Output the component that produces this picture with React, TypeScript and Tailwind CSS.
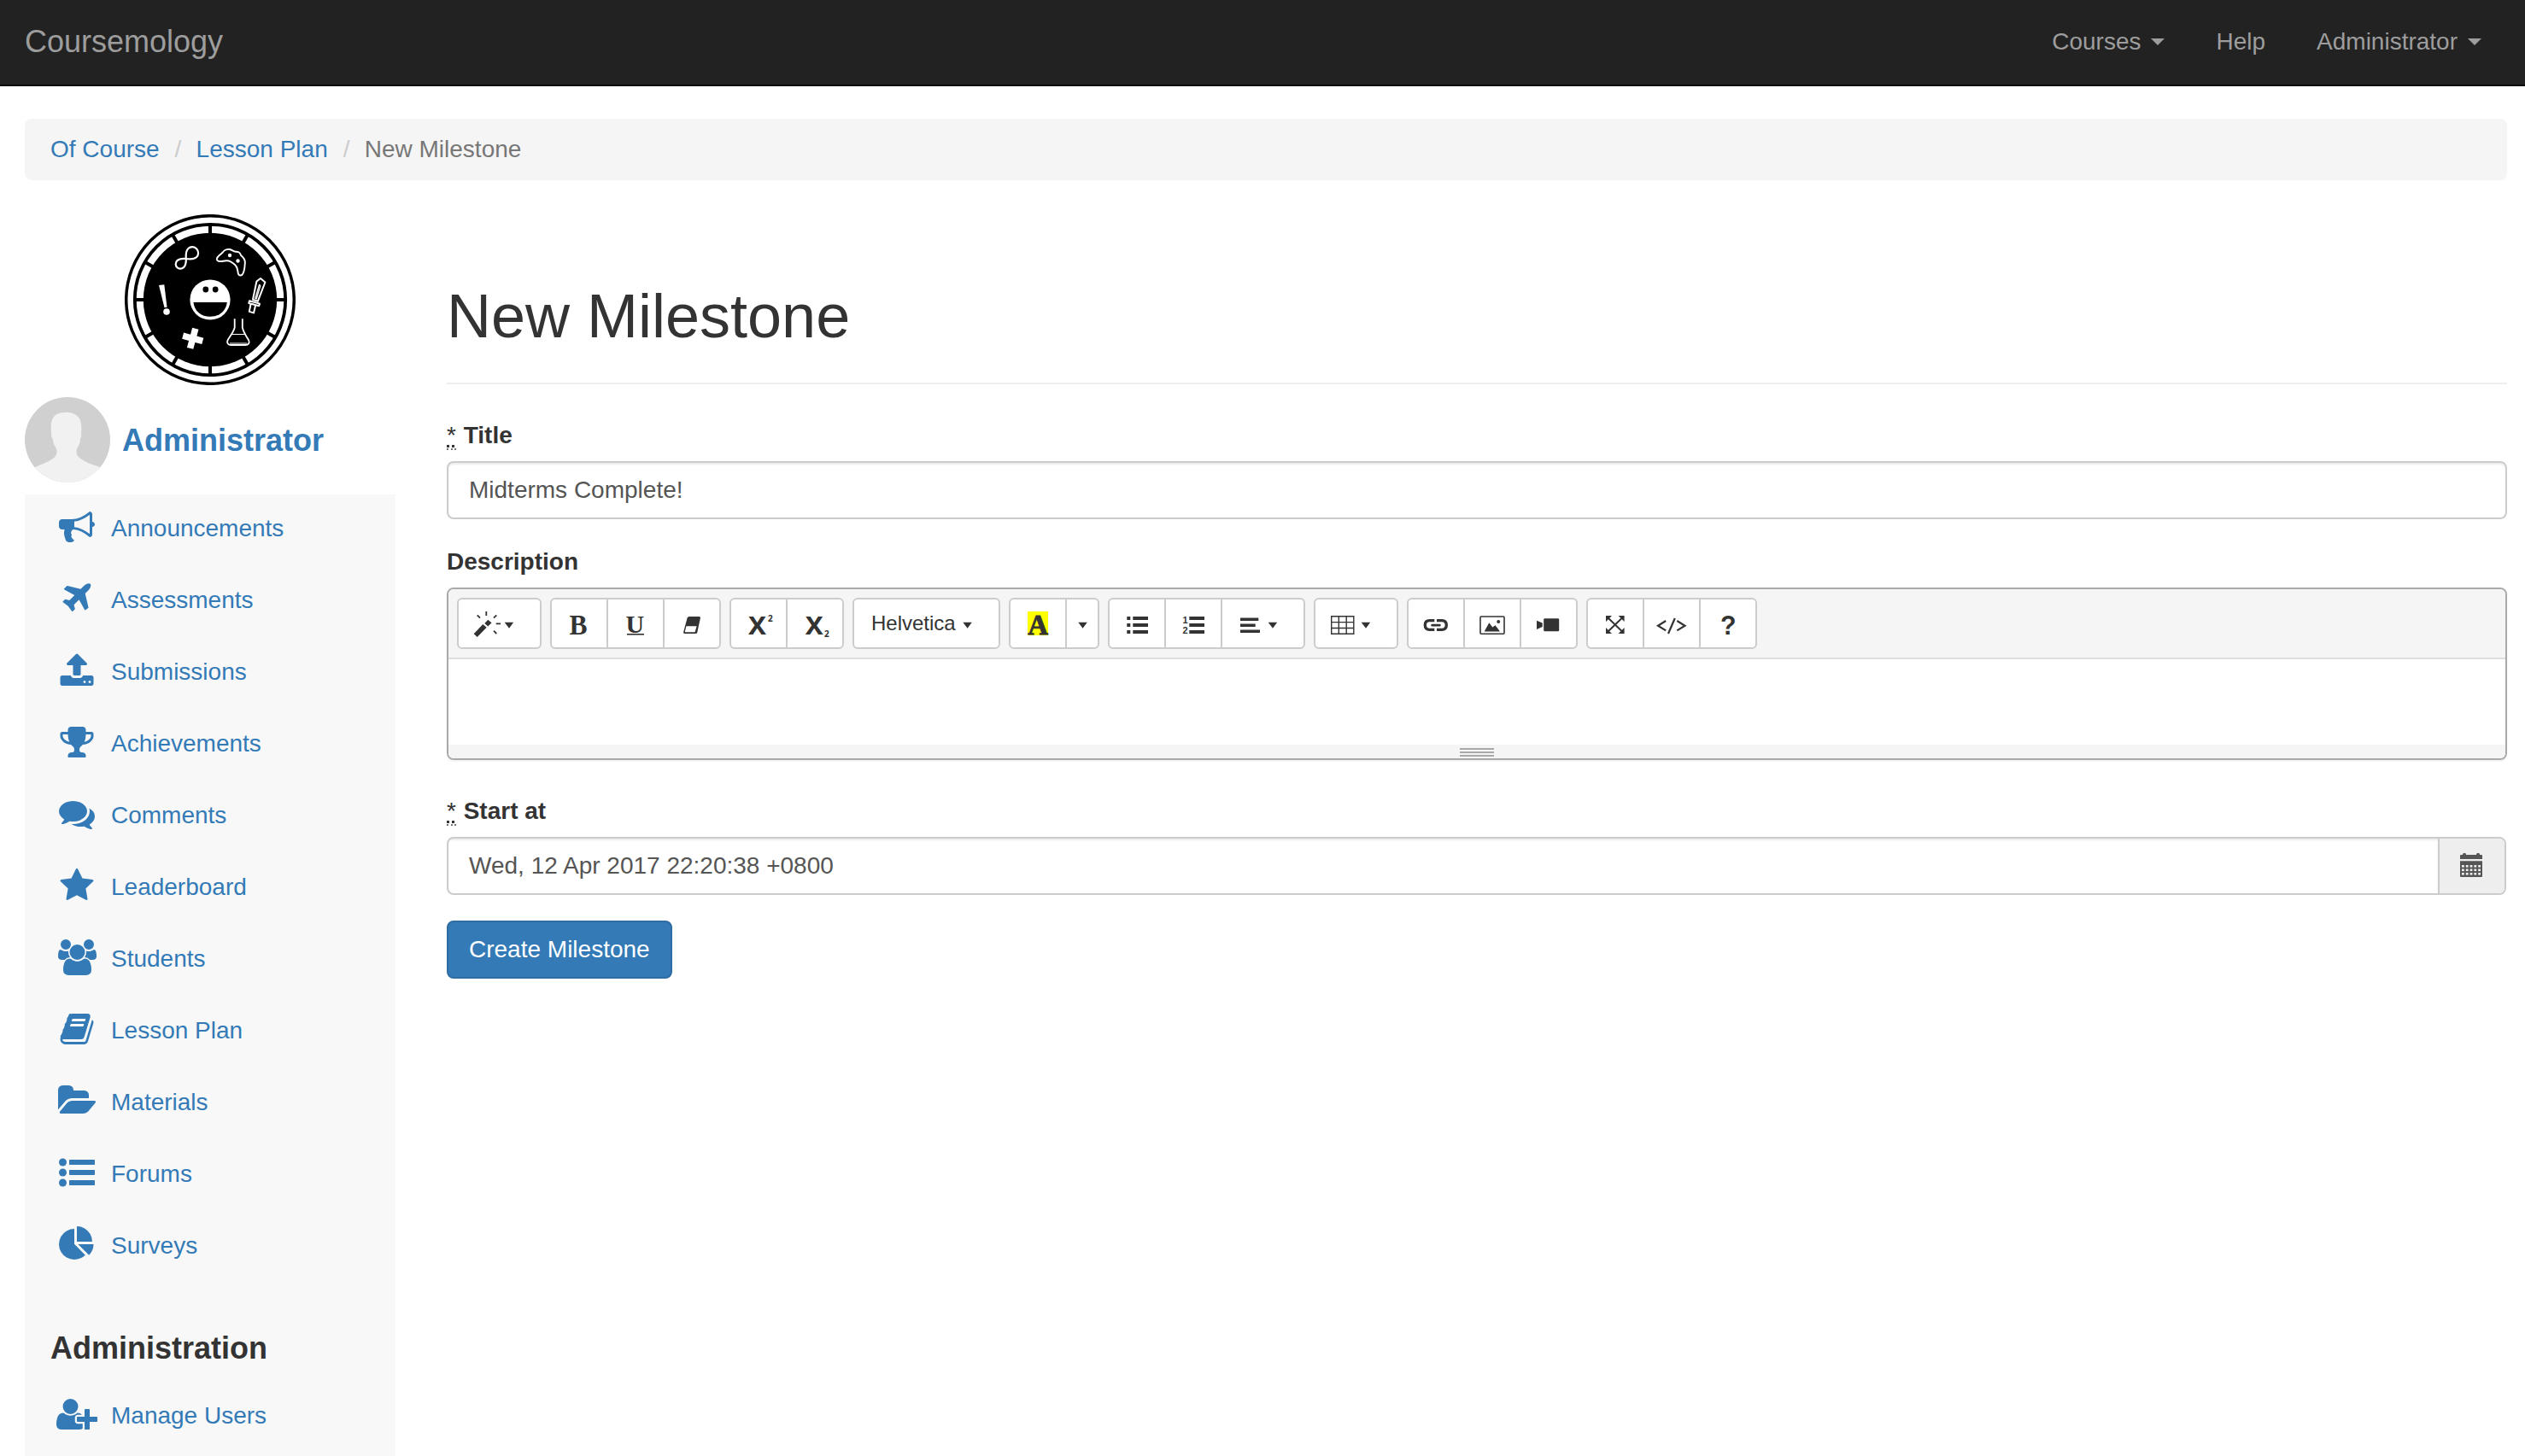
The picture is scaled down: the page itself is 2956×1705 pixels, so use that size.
import React from "react";

type IconDef = { w: number; body: React.ReactNode };

const icons: Record<string, IconDef> = {
  bullhorn: {
    w: 1792,
    body: (
      <path d="M1664 640q53 0 90.5 37.5t37.5 90.5-37.5 90.5-90.5 37.5v384q0 52-38 90t-90 38q-417-347-812-380-58 19-91 66t-31 100.5 40 92.5q-20 33-23 65.5t6 58 33.5 55 48 50 61.5 50.5q-29 58-111.5 83t-168.5 11.5-132-55.5q-7-23-29.5-87.5t-32-94.5-23-89-15-101 3.5-98.5 22-110.5h-122q-66 0-113-47t-47-113v-192q0-66 47-113t113-47h480q435 0 896-384 52 0 90 38t38 90v384zm-128 604v-954q-394 302-768 343v270q377 42 768 341z" />
    ),
  },
  plane: {
    w: 1792,
    body: (
      <path d="M1568 160q44 52 12 148t-108 172l-161 161 160 696q5 19-12 33l-128 96q-7 6-19 6-4 0-7-1-15-3-21-16l-279-508-259 259 53 194q5 17-8 31l-96 96q-9 9-23 9h-2q-15-2-24-13l-189-252-252-189q-11-7-13-23-1-13 9-25l96-97q9-9 23-9 6 0 8 1l194 53 259-259-508-279q-14-8-17-24-2-16 9-27l128-128q14-13 30-8l665 159 160-160q76-76 172-108t148 12z" />
    ),
  },
  upload: {
    w: 1792,
    body: (
      <path d="M1344 1472q0-26-19-45t-45-19-45 19-19 45 19 45 45 19 45-19 19-45zm256 0q0-26-19-45t-45-19-45 19-19 45 19 45 45 19 45-19 19-45zm128-224v320q0 40-28 68t-68 28h-1472q-40 0-68-28t-28-68v-320q0-40 28-68t68-28h427q21 56 70.5 92t110.5 36h256q61 0 110.5-36t70.5-92h427q40 0 68 28t28 68zm-325-648q-17 40-59 40h-256v448q0 26-19 45t-45 19h-256q-26 0-45-19t-19-45v-448h-256q-42 0-59-40-17-39 14-69l448-448q18-19 45-19t45 19l448 448q31 30 14 69z" />
    ),
  },
  trophy: {
    w: 1792,
    body: (
      <path d="M522 883q-74-162-74-371h-256v96q0 78 94.5 162t235.5 113zm1078-275v-96h-256q0 209-74 371 141-29 235.5-113t94.5-162zm128-128v128q0 71-41.5 143t-112 130-173 97.5-215.5 44.5q-42 54-95 95-38 34-52.5 72.5t-14.5 89.5q0 54 30.5 91t97.5 37q75 0 133.5 45.5t58.5 114.5v64q0 14-9 23t-23 9h-832q-14 0-23-9t-9-23v-64q0-69 58.5-114.5t133.5-45.5q67 0 97.5-37t30.5-91q0-51-14.5-89.5t-52.5-72.5q-53-41-95-95-113-5-215.5-44.5t-173-97.5-112-130-41.5-143v-128q0-40 28-68t68-28h288v-96q0-66 47-113t113-47h576q66 0 113 47t47 113v96h288q40 0 68 28t28 68z" />
    ),
  },
  comments: {
    w: 1792,
    body: (
      <path d="M1408 768q0 139-94 257t-256.5 186.5-353.5 68.5q-86 0-176-16-124 88-278 128-36 9-86 16h-3q-11 0-20.5-8t-11.5-21q-1-3-1-6.5t.5-6.5 2-6l2.5-5 3.5-5.5 4-5 4.5-5 4-4.5q5-6 23-25t26-29.5 22.5-29 25-38.5 20.5-44q-124-72-195-177t-71-224q0-139 94-257t256.5-186.5 353.5-68.5 353.5 68.5 256.5 186.5 94 257zm384 256q0 120-71 224.5t-195 176.5q10 24 20.5 44t25 38.5 22.5 29 26 29.5 23 25q1 1 4 4.5t4.5 5 4 5 3.5 5.5l2.5 5 2 6 .5 6.5-1 6.5q-3 14-13 22t-22 7q-50-7-86-16-154-40-278-128-90 16-176 16-271 0-472-132 58 4 88 4 161 0 309-45t264-129q125-92 192-212t67-254q0-77-23-152 129 71 204 178t75 230z" />
    ),
  },
  star: {
    w: 1792,
    body: (
      <path d="M1728 647q0 22-26 48l-363 354 86 500q1 7 1 20 0 21-10.5 35.5t-30.5 14.5q-19 0-40-12l-449-236-449 236q-22 12-40 12-21 0-31.5-14.5t-10.5-35.5q0-6 2-20l86-500-364-354q-25-27-25-48 0-37 56-46l502-73 225-455q19-41 49-41t49 41l225 455 502 73q56 9 56 46z" />
    ),
  },
  users: {
    w: 1920,
    body: (
      <path d="M593 896q-162 5-265 128h-134q-82 0-138-40.5t-56-118.5q0-353 124-353 6 0 43.5 21t97.5 42.5 119 21.5q67 0 133-23-5 37-5 66 0 139 81 256zm1071 637q0 120-73 189.5t-194 69.5h-874q-121 0-194-69.5t-73-189.5q0-53 3.5-103.5t14-109 26.5-108.5 43-97.5 62-81 85.5-53.5 111.5-20q10 0 43 21.5t73 48 107 48 135 21.5 135-21.5 107-48 73-48 43-21.5q61 0 111.5 20t85.5 53.5 62 81 43 97.5 26.5 108.5 14 109 3.5 103.5zm-1024-1277q0 106-75 181t-181 75-181-75-75-181 75-181 181-75 181 75 75 181zm704 384q0 159-112.5 271.5t-271.5 112.5-271.5-112.5-112.5-271.5 112.5-271.5 271.5-112.5 271.5 112.5 112.5 271.5zm576 225q0 78-56 118.5t-138 40.5h-134q-103-123-265-128 81-117 81-256 0-29-5-66 66 23 133 23 59 0 119-21.5t97.5-42.5 43.5-21q124 0 124 353zm-128-609q0 106-75 181t-181 75-181-75-75-181 75-181 181-75 181 75 75 181z" />
    ),
  },
  book: {
    w: 1792,
    body: (
      <path d="M1703 478q40 57 18 129l-275 906q-19 64-76.5 107.5t-122.5 43.5h-923q-77 0-148.5-53.5t-99.5-131.5q-24-67-2-127 0-4 3-27t4-37q1-8-3-21.5t-3-19.5q2-11 8-21t16.5-23.5 16.5-23.5q23-38 45-91.5t30-91.5q3-10 .5-30t-.5-28q3-11 17-28t17-23q21-36 42-92t25-90q1-9-2.5-32t.5-28q4-13 22-30.5t22-22.5q19-26 42.5-84.5t27.5-96.5q1-8-3-25.5t-2-26.5q2-8 9-18t18-23 17-21q8-12 16.5-30.5t15-35 16-36 19.5-32 26.5-23.5 36-11.5 47.5 5.5l-1 3q38-9 51-9h761q74 0 114 56t18 130l-274 906q-36 119-71.5 153.5t-128.5 34.5h-869q-27 0-38 15-11 16-1 43 24 70 144 70h923q29 0 56-15.5t35-41.5l300-987q7-22 5-57 38 15 59 43zm-1064 2q-4 13 2 22.5t20 9.5h608q13 0 25.5-9.5t16.5-22.5l21-64q4-13-2-22.5t-20-9.5h-608q-13 0-25.5 9.5t-16.5 22.5zm-83 256q-4 13 2 22.5t20 9.5h608q13 0 25.5-9.5t16.5-22.5l21-64q4-13-2-22.5t-20-9.5h-608q-13 0-25.5 9.5t-16.5 22.5z" />
    ),
  },
  folder: {
    w: 1920,
    body: (
      <path d="M1879 952q0 31-31 66l-336 396q-43 51-120.5 86.5t-143.5 35.5h-1088q-34 0-60.5-13t-26.5-43q0-31 31-66l336-396q43-51 120.5-86.5t143.5-35.5h1088q34 0 60.5 13t26.5 43zm-343-344v160h-832q-94 0-197 47.5t-164 119.5l-337 396-5 6q0-4-.5-12.5t-.5-12.5v-960q0-92 66-158t158-66h320q92 0 158 66t66 158v32h544q92 0 158 66t66 158z" />
    ),
  },
  list: {
    w: 1792,
    body: (
      <>
        <circle cx="192" cy="384" r="192" />
        <circle cx="192" cy="896" r="192" />
        <circle cx="192" cy="1408" r="192" />
        <rect x="512" y="256" width="1280" height="256" rx="32" />
        <rect x="512" y="768" width="1280" height="256" rx="32" />
        <rect x="512" y="1280" width="1280" height="256" rx="32" />
      </>
    ),
  },
  pie: {
    w: 1792,
    body: (
      <path d="M768 890l546 546q-106 108-247.5 168t-298.5 60q-209 0-385.5-103t-279.5-279.5-103-385.5 103-385.5 279.5-279.5 385.5-103v762zm187 6h773q0 157-60 298.5t-168 247.5zm709-128h-768v-768q209 0 385.5 103t279.5 279.5 103 385.5z" />
    ),
  },
  userPlus: {
    w: 2048,
    body: (
      <path d="M704 896q-159 0-271.5-112.5t-112.5-271.5 112.5-271.5 271.5-112.5 271.5 112.5 112.5 271.5-112.5 271.5-271.5 112.5zm960 128h352q13 0 22.5 9.5t9.5 22.5v192q0 13-9.5 22.5t-22.5 9.5h-352v352q0 13-9.5 22.5t-22.5 9.5h-192q-13 0-22.5-9.5t-9.5-22.5v-352h-352q-13 0-22.5-9.5t-9.5-22.5v-192q0-13 9.5-22.5t22.5-9.5h352v-352q0-13 9.5-22.5t22.5-9.5h192q13 0 22.5 9.5t9.5 22.5v352zm-736 224q0 52 38 90t90 38h256v238q-68 50-171 50h-874q-121 0-194-69t-73-190q0-53 3.5-103.5t14-109 26.5-108.5 43-97.5 62-81 85.5-53.5 111.5-20q19 0 39 17 79 61 154.5 91.5t164.5 30.5 164.5-30.5 154.5-91.5q20-17 39-17 132 0 217 96h-223q-52 0-90 38t-38 90v192z" />
    ),
  },
};

const menu: [string, string][] = [
  ["bullhorn", "Announcements"],
  ["plane", "Assessments"],
  ["upload", "Submissions"],
  ["trophy", "Achievements"],
  ["comments", "Comments"],
  ["star", "Leaderboard"],
  ["users", "Students"],
  ["book", "Lesson Plan"],
  ["folder", "Materials"],
  ["list", "Forums"],
  ["pie", "Surveys"],
];

function NavItem({ icon, label }: { icon: string; label: string }) {
  const def = icons[icon];
  return (
    <li>
      <a href="#" className="flex h-[76px] items-center gap-[9px] text-[#337ab7]">
        <span className="flex w-[62px] shrink-0 justify-center">
          <svg
            height="42"
            width={(def.w * 42) / 1792}
            viewBox={`0 0 ${def.w} 1792`}
            fill="currentColor"
          >
            {def.body}
          </svg>
        </span>
        <span className="pt-1">{label}</span>
      </a>
    </li>
  );
}

function Logo() {
  const ticks = Array.from({ length: 12 }, (_, i) => i * 30);
  return (
    <svg className="size-[200px]" viewBox="-100 -100 200 200">
      <circle r="98.3" fill="#fff" stroke="#000" strokeWidth="3.5" />
      <circle r="88.2" fill="#fff" stroke="#000" strokeWidth="3.8" />
      <circle r="78.2" />
      {ticks.map((a) => (
        <line key={a} y1="-76" y2="-88" stroke="#000" strokeWidth="4" transform={`rotate(${a})`} />
      ))}
      <circle r="23.6" fill="#fff" />
      <circle cx="-5.2" cy="-12" r="3.4" />
      <circle cx="6.2" cy="-12" r="3.4" />
      <path d="M-19.6 3H19.8C18.5 13.500 10.500 19.800 0 19.800S-18.300 13.500-19.600 3z" />
      <g fill="none" stroke="#fff" strokeWidth="2.200" strokeLinejoin="round">
        <path
          transform="translate(-28.200 -48) rotate(-43)"
          d="M0 0C4-5 6.500-7 10-7A7 7 0 0 1 10 7C6.500 7 4 5 0 0C-3.500-4-6-5.500-9-5.500A5.500 5.500 0 0 0-9 5.500C-6 5.500-3.500 4 0 0z"
        />
        <path
          strokeWidth="1.900"
          d="M7.800-47.700C8-51 12-52.500 14.700-55.500C17-58.500 20-59.500 23-59C26-58.300 27-56.500 30-56.200C33-56.500 35.500-54.500 36-52C38.500-50 41.500-46 40.700-42C40.500-37 40-33 38-30C37-28 34-28 33-30C32-33 33-37 29.500-40.500C26-44 22-46 19-45.800C15-45.500 12-44 9.500-45.300C8-46 7.800-46.800 7.800-47.700z"
        />
        <path strokeWidth="2" d="M59-25L64.400-20.500L55.800 1.800L50-.2L54.400-21.500z" />
        <path strokeWidth="1.300" d="M59-17L57.500-17.500L52.800-1.500L54.200-1L59-17" />
        <path strokeWidth="2" d="M46 1.200L58 4.600L57.200 7.200L45.300 4zM47.500 5.500L45.800 13.900L51 15.400L53 7" />
        <path
          strokeWidth="1.800"
          d="M28.700 22.300V32.500C27.500 38 23 43 20.500 47.500C19.500 50 20.500 53 24 53H41C45 53 46.500 50.500 45.200 47.500C42 42.500 39 38 37.800 32.500V22.300"
        />
        <path strokeWidth="1" d="M25 40.500H41M23 51H43" />
      </g>
      <circle cx="23" cy="-52" r="2.200" fill="#fff" />
      <circle cx="32.500" cy="-45.500" r="2.200" fill="#fff" />
      <path d="M-60-17L-53.700-17.800L-50.500 8.800L-53.500 9.300z" fill="#fff" />
      <circle cx="-51" cy="14" r="3.800" fill="#fff" />
      <path
        transform="translate(-20.300 45.300) rotate(15)"
        d="M-3.800-12H3.800V-3.800H12V3.800H3.800V12H-3.800V3.800H-12V-3.800H-3.800z"
        fill="#fff"
      />
    </svg>
  );
}

function Avatar() {
  return (
    <svg className="size-[100px] rounded-full" viewBox="0 0 100 100">
      <rect width="100" height="100" fill="#d0d0d0" />
      <path
        d="M0 100V88L12 82C20 78.500 31 75 35.500 69.500C38 66 38 63 36.500 59.500C34.500 57 33 53 32.500 48C31.500 48 31 46 31.200 44C30.500 37 30.500 32 31.500 28C34 20 40 18 49 17.800C57 18 62 21 65 27C66.500 32 66.500 38 66 44C66.500 46 66 48 65.200 48C65 53 63.500 57 61.500 59.500C60 63 60 66 62.500 69.500C67 75 79 79 88 82L100 88V100z"
        fill="#f1f1f1"
      />
    </svg>
  );
}

const Caret = () => (
  <span className="ml-3 border-x-8 border-t-8 border-x-transparent border-t-current" />
);

const CARET = "M53.700 26.700H64.200L59 33.700z";

function Group({ children }: { children: React.ReactNode }) {
  return (
    <div className="flex h-[60px] divide-x-2 divide-[#ccc] overflow-hidden rounded-md border-2 border-[#ccc] bg-white">
      {children}
    </div>
  );
}

function Tool({ w = 64, label, children }: { w?: number; label: string; children: React.ReactNode }) {
  return (
    <button type="button" aria-label={label} className="box-content block shrink-0 text-[#333]">
      <svg width={w} height="56" viewBox={`0 0 ${w} 56`} fill="currentColor">
        {children}
      </svg>
    </button>
  );
}

function Toolbar() {
  return (
    <div className="flex h-[82px] gap-2.5 border-b-2 border-[#ddd] bg-[#f5f5f5] px-2.5 pt-2.5">
      <Group>
        <Tool w={95} label="Style">
          <path d="M17.700 40.300L28.300 29L32.700 32.700L21.700 44zM30.300 28L34.300 23.700L38.500 27.300L34.300 31.500z" />
          <path
            d="M21.700 18.300L25 21.700M32.300 14V19M44.300 18.300L41 21.700M43.700 28.300H49M41 36.700L44.300 40"
            stroke="currentColor"
            strokeWidth="1.800"
          />
          <path d={CARET} />
        </Tool>
      </Group>
      <Group>
        <Tool label="Bold">
          <text x="20.500" y="41" fontSize="33" fontWeight="700" fontFamily="Liberation Serif, serif" textLength="21" lengthAdjust="spacingAndGlyphs">B</text>
        </Tool>
        <Tool label="Underline">
          <text x="20.500" y="39" fontSize="30" fontWeight="700" fontFamily="Liberation Serif, serif">U</text>
          <rect x="22" y="40" width="20" height="1.600" />
        </Tool>
        <Tool label="Remove Font Style">
          <path
            fillRule="evenodd"
            d="M29 20H40.500Q42.300 20 41.900 21.800L38.300 38.400Q37.900 40 36.300 40H23.500Q21.700 40 22.100 38.200L26.600 21.600Q27 20 29 20zM25.400 31.200L23.700 38.300H35.600L37.600 31.200z"
          />
        </Tool>
      </Group>
      <Group>
        <Tool label="Superscript">
          <text x="20" y="41" fontSize="28" fontWeight="700" fontFamily="Noto Sans, sans-serif" textLength="21" lengthAdjust="spacingAndGlyphs">X</text>
          <text x="43" y="26" fontSize="10" fontWeight="700" fontFamily="Noto Sans, sans-serif">2</text>
        </Tool>
        <Tool label="Subscript">
          <text x="20.700" y="41" fontSize="28" fontWeight="700" fontFamily="Noto Sans, sans-serif" textLength="21" lengthAdjust="spacingAndGlyphs">X</text>
          <text x="43" y="43.500" fontSize="10" fontWeight="700" fontFamily="Noto Sans, sans-serif">2</text>
        </Tool>
      </Group>
      <Group>
        <button type="button" className="flex w-[169px] pl-5 text-2xl leading-9 text-[#333]">
          <span className="pt-2.5">Helvetica</span>
          <svg className="ml-2" width="12" height="56" viewBox="0 0 12 56" fill="currentColor">
            <path d="M.3 26.700H10.800L5.600 33.700z" />
          </svg>
        </button>
      </Group>
      <Group>
        <Tool label="Recent Color">
          <rect x="20" y="14" width="24" height="28" fill="#ff0" />
          <text x="20.300" y="41.300" fontSize="33" fontWeight="700" stroke="currentColor" strokeWidth=".9" fontFamily="Liberation Serif, serif">A</text>
        </Tool>
        <Tool w={36} label="More Color">
          <path d="M13.300 26.700H23.800L18.600 33.700z" />
        </Tool>
      </Group>
      <Group>
        <Tool label="Unordered list">
          <path d="M20.300 20h4v4h-4zM20.300 28h4v4h-4zM20.300 36h4v4h-4zM27.300 20H45v4H27.300zM27.300 28H45v4H27.300zM27.300 36H45v4H27.300z" />
        </Tool>
        <Tool label="Ordered list">
          <text x="19.500" y="28" fontSize="11" fontWeight="700" fontFamily="Liberation Sans, sans-serif">1</text>
          <text x="19.500" y="40" fontSize="11" fontWeight="700" fontFamily="Liberation Sans, sans-serif">2</text>
          <path d="M27.300 20H45v4H27.300zM27.300 28H45v4H27.300zM27.300 36H45v4H27.300z" />
        </Tool>
        <Tool w={95} label="Paragraph">
          <path d="M21 21.500H42.300v3.500H21zM21 28.500H38.700V32H21zM21 35.500H44V39H21z" />
          <path d={CARET} />
        </Tool>
      </Group>
      <Group>
        <Tool w={95} label="Table">
          <path
            d="M18.700 19.800H44.800V40.300H18.700zM27.300 20V40M36.200 20V40M19 26.600H45M19 33.500H45"
            fill="none"
            stroke="currentColor"
            strokeWidth="1.400"
          />
          <path d={CARET} />
        </Tool>
      </Group>
      <Group>
        <Tool label="Link">
          <path
            d="M30.300 24.700H24.500Q19.300 24.700 19.300 30T24.500 35.400H30.300M33 24.700H39Q44.300 24.700 44.300 30T39 35.400H33"
            fill="none"
            stroke="currentColor"
            strokeWidth="3.300"
          />
          <rect x="26.300" y="28.700" width="11.400" height="2.900" rx="1.400" />
        </Tool>
        <Tool label="Picture">
          <rect x="18" y="20" width="28" height="20.300" rx="1" fill="none" stroke="currentColor" strokeWidth="1.600" />
          <path d="M22.700 37.500L28.300 27.300L32.300 32.500L35.500 30.200L41 37.500z" />
          <circle cx="39.200" cy="26" r="2" />
        </Tool>
        <Tool label="Video">
          <rect x="26.200" y="22.300" width="18" height="14.900" rx="1.300" />
          <path d="M18 24.700L24.700 27.500V32L18 35z" />
        </Tool>
      </Group>
      <Group>
        <Tool label="Full Screen">
          <path d="M21 19H28L21 26zM42.600 19V26L35.600 19zM21 40V33L28 40zM42.600 40H35.600L42.600 33z" />
          <path d="M23 21L40.600 38M40.600 21L23 38" stroke="currentColor" strokeWidth="2" />
        </Tool>
        <Tool label="Code View">
          <path
            d="M25.200 25L16 30.700L25.200 36.400M35.800 22L28 40M38.300 25L47.500 30.700L38.300 36.400"
            fill="none"
            stroke="currentColor"
            strokeWidth="2.200"
          />
        </Tool>
        <Tool label="Help">
          <text x="23" y="41" fontSize="31" fontWeight="700" fontFamily="Liberation Sans, sans-serif" textLength="18.500" lengthAdjust="spacingAndGlyphs">?</text>
        </Tool>
      </Group>
    </div>
  );
}

function Label({ required, children }: { required?: boolean; children: React.ReactNode }) {
  return (
    <label className="mb-2.5 block font-bold">
      {required && (
        <>
          <abbr className="mr-px border-b-2 border-dotted border-[#777] font-normal underline decoration-dotted decoration-[3px] underline-offset-[2px] [text-decoration-skip-ink:none]">
            *
          </abbr>{" "}
        </>
      )}
      {children}
    </label>
  );
}

const fieldShadow = "shadow-[inset_0_2px_2px_rgba(0,0,0,0.075)]";

function CalendarIcon() {
  const cells = [0, 1, 2].flatMap((r) => [0, 1, 2, 3, 4].map((c) => [c, r]));
  return (
    <svg className="mr-0.5 mb-0.5" width="26" height="28" viewBox="0 0 26 28">
      <path d="M0 3Q0 2 1 2H3Q3 0 4.500 0H6Q7 0 7 2H19Q19 0 20.500 0H22Q23 0 23 2H25Q26 2 26 3V7H0zM0 9.300H26V27Q26 28 25 28H1Q0 28 0 27z" fill="#555" />
      {cells.map(([c, r]) => (
        <rect key={`${c}-${r}`} x={2 + c * 4.8} y={14 + r * 4.5} width="2.800" height="2.600" fill="#eee" />
      ))}
    </svg>
  );
}

export default function App() {
  return (
    <div className="h-[1705px] overflow-hidden bg-white font-['Liberation_Sans',Arial,sans-serif] text-[28px] leading-10 text-[#333]">
      <nav className="flex h-[101px] justify-between border-b-2 border-[#080808] bg-[#222] pr-[51px] pl-[29px] text-[#9d9d9d]">
        <a href="#" className="pt-[29px] text-4xl leading-10">Coursemology</a>
        <div className="flex gap-[60px] pt-[29px]">
          <a href="#" className="flex h-10 items-center">Courses<Caret /></a>
          <a href="#">Help</a>
          <a href="#" className="flex h-10 items-center">Administrator<Caret /></a>
        </div>
      </nav>

      <div className="pt-[38px] pr-[21px] pl-[29px]">
        <ol className="flex h-[72px] rounded-lg bg-[#f5f5f5] px-[30px] py-4">
          <li><a href="#" className="text-[#337ab7]">Of Course</a></li>
          <li className="flex">
            <span className="w-[43px] pl-[18px] text-[#ccc]">/</span>
            <a href="#" className="text-[#337ab7]">Lesson Plan</a>
          </li>
          <li className="flex text-[#777]">
            <span className="w-[43px] pl-[18px] text-[#ccc]">/</span>
            New Milestone
          </li>
        </ol>

        <div className="mt-10 flex gap-[60px]">
          <aside className="w-[434px] shrink-0">
            <div className="flex justify-center">
              <Logo />
            </div>
            <div className="my-3.5 flex items-center gap-3.5">
              <Avatar />
              <a href="#" className="pt-0.5 text-4xl leading-10 font-bold text-[#337ab7]">Administrator</a>
            </div>
            <div className="h-[1126px] bg-[#f8f8f8] pl-[30px]">
              <ul className="flex flex-col gap-2">
                {menu.map(([icon, label]) => (
                  <NavItem key={label} icon={icon} label={label} />
                ))}
              </ul>
              <h4 className="mt-16 mb-[19px] text-4xl leading-10 font-bold">Administration</h4>
              <ul>
                <NavItem icon="userPlus" label="Manage Users" />
              </ul>
            </div>
          </aside>

          <main className="min-w-0 flex-1 pt-[79px]">
            <h1 className="mb-10 border-b-2 border-[#eee] pb-[38px] text-[72px] leading-[80px]">New Milestone</h1>

            <form>
              <Label required>Title</Label>
              <div className={`mb-[30px] h-[68px] rounded-lg border-2 border-[#ccc] px-6 py-3 text-[#555] ${fieldShadow}`}>
                Midterms Complete!
              </div>

              <Label>Description</Label>
              <div className="mb-10 overflow-hidden rounded-lg border-2 border-[#a9a9a9] shadow-[0_2px_2px_rgba(0,0,0,0.05)]">
                <Toolbar />
                <div className="h-[100px] bg-white" />
                <div className="flex h-4 flex-col items-center gap-0.5 bg-[#f5f5f5] pt-1">
                  <div className="h-0.5 w-10 bg-[#a9a9a9]" />
                  <div className="h-0.5 w-10 bg-[#a9a9a9]" />
                  <div className="h-0.5 w-10 bg-[#a9a9a9]" />
                </div>
              </div>

              <Label required>Start at</Label>
              <div className="mr-px mb-[30px] flex h-[68px] overflow-hidden rounded-lg border-2 border-[#ccc]">
                <div className={`flex-1 px-6 py-3 text-[#555] ${fieldShadow}`}>Wed, 12 Apr 2017 22:20:38 +0800</div>
                <div className="flex w-[78px] items-center justify-center border-l-2 border-[#ccc] bg-[#eee]">
                  <CalendarIcon />
                </div>
              </div>

              <button type="button" className="h-[68px] rounded-lg border-2 border-[#2e6da4] bg-[#337ab7] px-6 text-white">
                Create Milestone
              </button>
            </form>
          </main>
        </div>
      </div>
    </div>
  );
}
